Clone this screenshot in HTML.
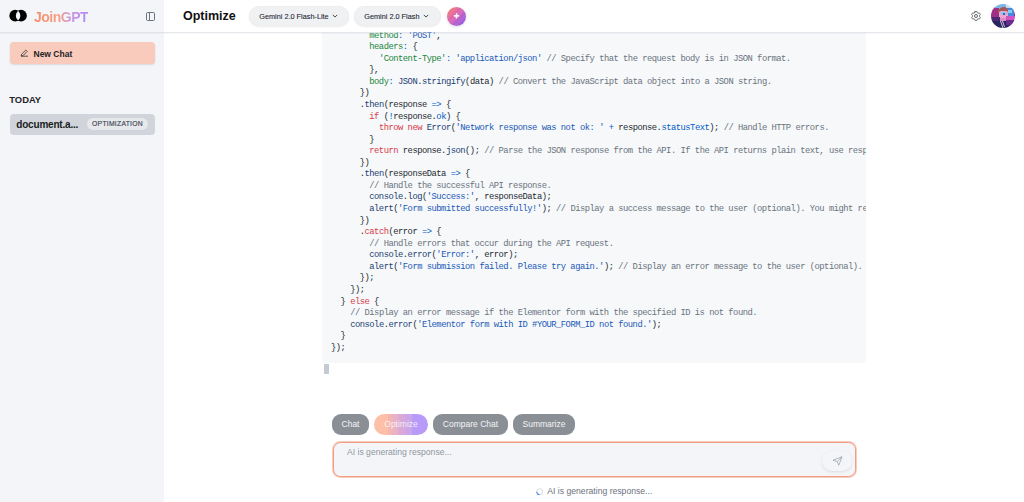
<!DOCTYPE html>
<html><head><meta charset="utf-8">
<style>
*{box-sizing:border-box;margin:0;padding:0}
html,body{width:1024px;height:502px;overflow:hidden;background:#fff;font-family:"Liberation Sans",sans-serif;color:#111827}
#side{position:absolute;left:0;top:0;width:164px;height:502px;background:#f4f5f9}
#hdr-line{position:absolute;left:0;top:32px;width:1024px;height:2px;background:linear-gradient(180deg,rgba(200,205,214,.45) 0 50%,rgba(200,205,214,.18) 50% 100%)}
#main{position:absolute;left:164px;top:0;width:860px;height:502px;background:#fff}
.logo{position:absolute;left:9px;top:9px;width:19px;height:14px}
.brand{position:absolute;left:34px;top:9px;font-size:14px;font-weight:bold;letter-spacing:-0.5px;background:linear-gradient(90deg,#f98a6a 0%,#f4a07e 45%,#c896e6 70%,#b08cf6 100%);-webkit-background-clip:text;background-clip:text;color:transparent;line-height:17px}
.panel{position:absolute;left:146px;top:12px;width:9px;height:9px}
.newchat{position:absolute;left:10px;top:42px;width:145px;height:22px;border-radius:4px;background:#f8cbbd;box-shadow:0 1px 2px rgba(0,0,0,.12)}
.newchat span{position:absolute;left:23.5px;top:5.8px;font-size:8.5px;font-weight:bold;color:#1f2328;line-height:12px}
.newchat svg{position:absolute;left:10px;top:7px}
.today{position:absolute;left:9.3px;top:94.3px;font-size:9.4px;font-weight:bold;color:#1f2328;line-height:11px}
.item{position:absolute;left:10px;top:114px;width:145px;height:20.5px;border-radius:4px;background:#d1d4da}
.item .t{position:absolute;left:6.3px;top:3.5px;font-size:10px;font-weight:bold;color:#1a1d21;line-height:13px;letter-spacing:-0.2px}
.item .p{position:absolute;left:77px;top:4.2px;width:61px;height:12px;border-radius:6px;background:#e6e8ec;font-size:6.8px;color:#3f4753;line-height:12px;text-align:center;letter-spacing:.25px;-webkit-text-stroke:.15px #3f4753}

.title{position:absolute;left:183px;top:9px;font-size:12.5px;font-weight:bold;color:#111;line-height:15px}
.dd{position:absolute;top:6px;height:20px;border-radius:10px;background:#f0f1f3;box-shadow:0 1px 2px rgba(0,0,0,.08);border:1px solid #eceef1;font-size:7.3px;color:#1f2733;line-height:18px;-webkit-text-stroke:.1px #1f2733}
.dd span{position:absolute;left:9.3px;top:0.5px}
.dd svg{position:absolute;top:7px}
.plus{position:absolute;left:447px;top:7px;width:19px;height:19px;border-radius:50%;background:repeating-linear-gradient(135deg,rgba(255,255,255,.06) 0 3px,rgba(255,255,255,0) 3px 6px),linear-gradient(135deg,#f68a6c 0%,#e86c92 28%,#d064bc 52%,#a35cdc 76%,#8656ea 100%);box-shadow:0 1px 3px rgba(0,0,0,.15)}
.gear{position:absolute;left:970px;top:10px}
.avatar{position:absolute;left:991px;top:4px;width:24px;height:24px;border-radius:50%;overflow:hidden}

#code{position:absolute;left:322px;top:-14px;width:544px;height:377px;background:#f6f8fa;border-radius:3px;overflow:hidden}
#code pre{position:absolute;left:9px;top:33px;font-family:"Liberation Mono",monospace;font-size:8.8px;letter-spacing:-0.492px;line-height:11.56px;color:#24292e;white-space:pre}
.k{color:#d73a49}.s{color:#1a58b8}.c{color:#6a737d}.a{color:#22863a}.f{color:#1c3e73}.o{color:#005cc5}.n{color:#005cc5}
.cursor{position:absolute;left:324px;top:364px;width:5px;height:10px;background:#c5cbd4}

#hdr{position:absolute;left:164px;top:0;width:860px;height:32px;background:#fff}

.chip{position:absolute;top:414px;height:21px;border-radius:9px;background:#8a8e95;color:#f3f4f6;font-size:8.5px;line-height:21px;text-align:center}
.input{position:absolute;left:333px;top:442px;width:523px;height:35px;border:1px solid #f29c82;border-radius:7.5px;background:#f4f5f9;box-shadow:0 0 0 1px rgba(244,160,134,.55)}
.input .ph{position:absolute;left:13px;top:3.3px;font-size:8.6px;color:#8f959e;line-height:12px}
.send{position:absolute;left:488.3px;top:7.5px;width:30px;height:20px;border-radius:10px;background:#f4f5f8;box-shadow:0 1px 3px rgba(0,0,0,.10)}
.status{position:absolute;left:547.3px;top:486px;font-size:8.65px;color:#6b7280;line-height:11px}
.spin{position:absolute;left:535.5px;top:488px;width:7.4px;height:7.4px}
</style></head><body>
<div id="main"></div>
<div id="code"><pre>      fetch(apiUrl, {
        <span class="a">method</span><span class="o">:</span> <span class="s">'POST'</span>,
        <span class="a">headers</span><span class="o">:</span> {
          <span class="a">'Content-Type'</span><span class="o">:</span> <span class="s">'application/json'</span> <span class="c">// Specify that the request body is in JSON format.</span>
        },
        <span class="a">body</span><span class="o">:</span> <span class="f">JSON</span>.<span class="f">stringify</span>(data) <span class="c">// Convert the JavaScript data object into a JSON string.</span>
      })
      .<span class="f">then</span>(response <span class="o">=&gt;</span> {
        <span class="k">if</span> (<span class="o">!</span>response.<span class="o">ok</span>) {
          <span class="k">throw</span> <span class="k">new</span> <span class="f">Error</span>(<span class="s">'Network response was not ok: '</span> <span class="o">+</span> response.<span class="o">statusText</span>); <span class="c">// Handle HTTP errors.</span>
        }
        <span class="k">return</span> response.<span class="f">json</span>(); <span class="c">// Parse the JSON response from the API. If the API returns plain text, use response.text() instead.</span>
      })
      .<span class="f">then</span>(responseData <span class="o">=&gt;</span> {
        <span class="c">// Handle the successful API response.</span>
        <span class="f">console</span>.<span class="f">log</span>(<span class="s">'Success:'</span>, responseData);
        <span class="f">alert</span>(<span class="s">'Form submitted successfully!'</span>); <span class="c">// Display a success message to the user (optional). You might redirect the user instead.</span>
      })
      .<span class="k">catch</span>(error <span class="o">=&gt;</span> {
        <span class="c">// Handle errors that occur during the API request.</span>
        <span class="f">console</span>.<span class="f">error</span>(<span class="s">'Error:'</span>, error);
        <span class="f">alert</span>(<span class="s">'Form submission failed. Please try again.'</span>); <span class="c">// Display an error message to the user (optional). You might show details.</span>
      });
    });
  } <span class="k">else</span> {
    <span class="c">// Display an error message if the Elementor form with the specified ID is not found.</span>
    <span class="f">console</span>.<span class="f">error</span>(<span class="s">'Elementor form with ID #YOUR_FORM_ID not found.'</span>);
  }
});</pre></div>
<div class="cursor"></div>
<div id="hdr"></div>
<div id="side"></div>
<div id="hdr-line"></div>

<!-- sidebar -->
<svg class="logo" width="19" height="14" viewBox="0 0 19 14"><defs><clipPath id="lc"><circle cx="12.65" cy="6.65" r="5.8"/></clipPath></defs><circle cx="6.15" cy="6.65" r="5.8" fill="#000"/><circle cx="12.05" cy="6.65" r="5.8" fill="#000"/><circle cx="5.55" cy="6.65" r="5.8" fill="#f4f5f9" clip-path="url(#lc)"/></svg>
<div class="brand">JoinGPT</div>
<svg class="panel" viewBox="0 0 9 9"><rect x="0.5" y="0.5" width="8" height="8" rx="1.2" fill="none" stroke="#6b7280" stroke-width="1"/><line x1="3.5" y1="0.5" x2="3.5" y2="8.5" stroke="#6b7280" stroke-width="1"/></svg>
<div class="newchat"><svg width="9" height="8" viewBox="0 0 9 8"><path d="M1 7.2h7M1.2 7 1.6 5.2 5.8 1 7.2 2.4 3 6.6Z" fill="none" stroke="#333" stroke-width=".8" stroke-linejoin="round"/></svg><span>New Chat</span></div>
<div class="today">TODAY</div>
<div class="item"><div class="t">document.a...</div><div class="p">OPTIMIZATION</div></div>

<!-- header -->
<div class="title">Optimize</div>
<div class="dd" style="left:249px;width:100px"><span>Gemini 2.0 Flash-Lite</span><svg style="left:82px;top:7.3px" width="6" height="4" viewBox="0 0 6 4"><path d="M.8.9 3 3.1 5.2.9" fill="none" stroke="#3a4250" stroke-width=".95"/></svg></div>
<div class="dd" style="left:354px;width:87px"><span>Gemini 2.0 Flash</span><svg style="left:68px;top:7.3px" width="6" height="4" viewBox="0 0 6 4"><path d="M.8.9 3 3.1 5.2.9" fill="none" stroke="#3a4250" stroke-width=".95"/></svg></div>
<div class="plus"><svg width="19" height="19" viewBox="0 0 19 19"><path d="M9.5 6.8v4.2M7.4 8.9h4.2" stroke="#fff" stroke-width="1.6" stroke-linecap="round" opacity=".92"/></svg></div>
<svg class="gear" width="12" height="12" viewBox="0 0 24 24"><path fill="none" stroke="#5a5f66" stroke-width="1.9" stroke-linecap="round" stroke-linejoin="round" d="M9.594 3.94c.09-.542.56-.94 1.11-.94h2.593c.55 0 1.02.398 1.11.94l.213 1.281c.063.374.313.686.645.87.074.04.147.083.22.127.325.196.72.257 1.075.124l1.217-.456a1.125 1.125 0 0 1 1.37.49l1.296 2.247a1.125 1.125 0 0 1-.26 1.431l-1.003.827c-.293.241-.438.613-.43.992a7.723 7.723 0 0 1 0 .255c-.008.378.137.75.43.991l1.004.827c.424.35.534.955.26 1.43l-1.298 2.247a1.125 1.125 0 0 1-1.369.491l-1.217-.456c-.355-.133-.75-.072-1.076.124a6.47 6.47 0 0 1-.22.128c-.331.183-.581.495-.644.869l-.213 1.281c-.09.543-.56.94-1.11.94h-2.594c-.55 0-1.019-.398-1.11-.94l-.213-1.281c-.062-.374-.312-.686-.644-.87a6.52 6.52 0 0 1-.22-.127c-.325-.196-.72-.257-1.076-.124l-1.217.456a1.125 1.125 0 0 1-1.369-.49l-1.297-2.247a1.125 1.125 0 0 1 .26-1.431l1.004-.827c.292-.24.437-.613.43-.991a6.932 6.932 0 0 1 0-.255c.007-.38-.138-.751-.43-.992l-1.004-.827a1.125 1.125 0 0 1-.26-1.43l1.297-2.247a1.125 1.125 0 0 1 1.37-.491l1.216.456c.356.133.751.072 1.076-.124.072-.044.146-.086.22-.128.332-.183.582-.495.644-.869l.214-1.28Z"/><circle cx="12" cy="12" r="3" fill="none" stroke="#5a5f66" stroke-width="1.9"/></svg>
<div class="avatar"><svg width="24" height="24" viewBox="0 0 24 24"><defs><filter id="bl" x="-10%" y="-10%" width="120%" height="120%"><feGaussianBlur stdDeviation=".55"/></filter></defs><g style="filter:blur(.5px)">
<rect width="24" height="24" fill="#8a2d80"/>
<rect x="4" y="0" width="20" height="6" fill="#7fb4e6"/>
<rect x="15" y="0" width="9" height="5" fill="#c6def2"/>
<rect x="14" y="4" width="9" height="9" fill="#4d86dc"/>
<rect x="17" y="6" width="4" height="3" fill="#7ed0f0"/>
<rect x="0" y="4" width="8" height="10" fill="#a02f86"/>
<path d="M7 7 Q9 3 13 3 Q16 3 17 6 L17 8 L7 9Z" fill="#a45a54"/>
<rect x="8" y="7" width="9" height="10" rx="2" fill="#eea6cc"/>
<rect x="10" y="8" width="5" height="3" fill="#8cc6ee"/>
<rect x="12" y="9" width="2" height="2" fill="#3a62c0"/>
<rect x="15" y="12" width="9" height="5" fill="#d055c2"/>
<rect x="0" y="13" width="9" height="5" fill="#4b2a72"/>
<rect x="0" y="17" width="24" height="7" fill="#2c2462"/>
<rect x="15" y="16" width="9" height="5" fill="#6c2c8e"/>
<rect x="9" y="14" width="6" height="3" fill="#dc8ac8"/>
<path d="M9.5 17 L12 24 M11.5 17 L13.5 23" stroke="#c8c8dc" stroke-width="1"/>
</g></svg></div>

<!-- bottom -->
<div class="chip" style="left:332px;width:37px">Chat</div>
<div class="chip" style="left:374.3px;width:53.5px;border-radius:10.5px;background:linear-gradient(90deg,#fdbfa8 0 25.8%,#f3b6b5 25.8% 33.3%,#e9b3c4 33.3% 42.6%,#e2aecf 42.6% 46.5%,#d8a9d9 46.5% 58.1%,#cba6e8 58.1% 69.7%,#b89bf8 69.7%);color:rgba(255,255,255,.8)">Optimize</div>
<div class="chip" style="left:433px;width:75px">Compare Chat</div>
<div class="chip" style="left:513px;width:62px">Summarize</div>
<div class="input"><div class="ph">AI is generating response...</div><div class="send"><svg style="position:absolute;left:9.5px;top:5.5px" width="11" height="10" viewBox="0 0 11 10"><path d="M1 4.2 10 .8 6.8 9.2 5.2 5.6Z M5.2 5.6 10 .8" fill="none" stroke="#98a0ad" stroke-width=".75" stroke-linejoin="round"/></svg></div></div>
<svg class="spin" viewBox="0 0 8 8"><circle cx="4" cy="4" r="3.2" fill="none" stroke="#d9dde3" stroke-width="1.1"/><path d="M4 7.2A3.2 3.2 0 0 1 .8 4" fill="none" stroke="#3b82f6" stroke-width="1.1"/></svg>
<div class="status">AI is generating response...</div>
</body></html>
